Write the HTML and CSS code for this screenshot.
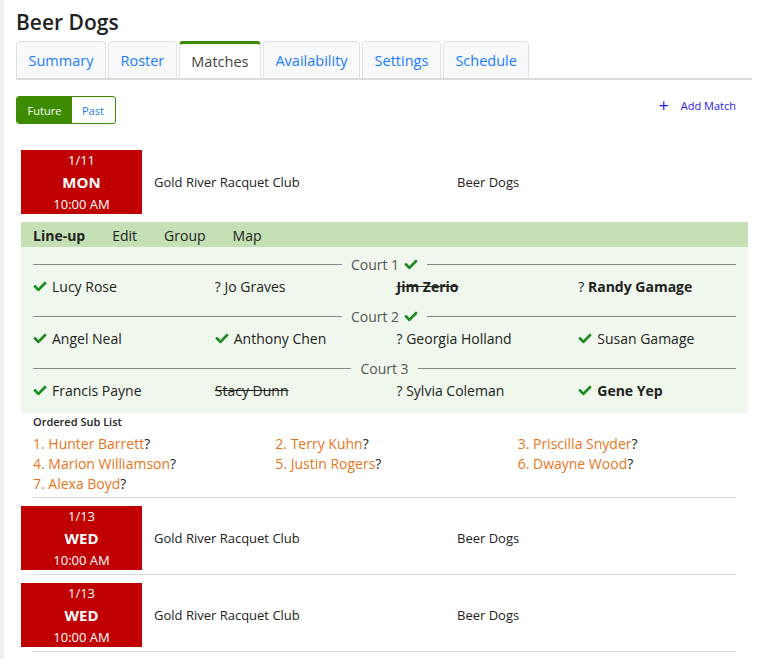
FILE: index.html
```html
<!DOCTYPE html>
<html>
<head>
<meta charset="utf-8">
<link rel="stylesheet" href="styles.css">
</head>
<body>
<div class="page">
  <h1 class="title">Beer Dogs</h1>
  <ul class="tabs">
    <li class="tab">Summary</li>
    <li class="tab">Roster</li>
    <li class="tab active">Matches</li>
    <li class="tab">Availability</li>
    <li class="tab">Settings</li>
    <li class="tab">Schedule</li>
  </ul>
  <div class="toolbar">
    <div class="toggle"><span class="seg on">Future</span><span class="seg">Past</span></div>
    <a class="add"><span class="plus">+</span>Add Match</a>
  </div>

  <div class="matches">
    <div class="match">
      <div class="match-head">
        <div class="date"><div class="d">1/11</div><div class="dow">MON</div><div class="tm">10:00 AM</div></div>
        <div class="venue">Gold River Racquet Club</div>
        <div class="team">Beer Dogs</div>
      </div>
      <div class="detail">
        <div class="detail-nav"><span class="nav-item cur">Line-up</span><span class="nav-item">Edit</span><span class="nav-item">Group</span><span class="nav-item">Map</span></div>
        <div class="lineup">
          <div class="court"><span class="court-label">Court 1 <svg class="ck" viewBox="0 0 512 512"><path d="M173.9 439.4l-166.4-166.4c-10-10-10-26.2 0-36.2l36.2-36.2c10-10 26.2-10 36.2 0L192 312.7 432.1 72.6c10-10 26.2-10 36.2 0l36.2 36.2c10 10 10 26.2 0 36.2l-294.4 294.4c-10 10-26.2 10-36.2 0z"/></svg></span></div>
          <div class="players">
            <div class="p"><svg class="ck" viewBox="0 0 512 512"><path d="M173.9 439.4l-166.4-166.4c-10-10-10-26.2 0-36.2l36.2-36.2c10-10 26.2-10 36.2 0L192 312.7 432.1 72.6c10-10 26.2-10 36.2 0l36.2 36.2c10 10 10 26.2 0 36.2l-294.4 294.4c-10 10-26.2 10-36.2 0z"/></svg>Lucy Rose</div>
            <div class="p">? Jo Graves</div>
            <div class="p"><span class="out b">Jim Zerio</span></div>
            <div class="p">? <span class="b">Randy Gamage</span></div>
          </div>
          <div class="court"><span class="court-label">Court 2 <svg class="ck" viewBox="0 0 512 512"><path d="M173.9 439.4l-166.4-166.4c-10-10-10-26.2 0-36.2l36.2-36.2c10-10 26.2-10 36.2 0L192 312.7 432.1 72.6c10-10 26.2-10 36.2 0l36.2 36.2c10 10 10 26.2 0 36.2l-294.4 294.4c-10 10-26.2 10-36.2 0z"/></svg></span></div>
          <div class="players">
            <div class="p"><svg class="ck" viewBox="0 0 512 512"><path d="M173.9 439.4l-166.4-166.4c-10-10-10-26.2 0-36.2l36.2-36.2c10-10 26.2-10 36.2 0L192 312.7 432.1 72.6c10-10 26.2-10 36.2 0l36.2 36.2c10 10 10 26.2 0 36.2l-294.4 294.4c-10 10-26.2 10-36.2 0z"/></svg>Angel Neal</div>
            <div class="p"><svg class="ck" viewBox="0 0 512 512"><path d="M173.9 439.4l-166.4-166.4c-10-10-10-26.2 0-36.2l36.2-36.2c10-10 26.2-10 36.2 0L192 312.7 432.1 72.6c10-10 26.2-10 36.2 0l36.2 36.2c10 10 10 26.2 0 36.2l-294.4 294.4c-10 10-26.2 10-36.2 0z"/></svg>Anthony Chen</div>
            <div class="p">? Georgia Holland</div>
            <div class="p"><svg class="ck" viewBox="0 0 512 512"><path d="M173.9 439.4l-166.4-166.4c-10-10-10-26.2 0-36.2l36.2-36.2c10-10 26.2-10 36.2 0L192 312.7 432.1 72.6c10-10 26.2-10 36.2 0l36.2 36.2c10 10 10 26.2 0 36.2l-294.4 294.4c-10 10-26.2 10-36.2 0z"/></svg>Susan Gamage</div>
          </div>
          <div class="court"><span class="court-label">Court 3</span></div>
          <div class="players">
            <div class="p"><svg class="ck" viewBox="0 0 512 512"><path d="M173.9 439.4l-166.4-166.4c-10-10-10-26.2 0-36.2l36.2-36.2c10-10 26.2-10 36.2 0L192 312.7 432.1 72.6c10-10 26.2-10 36.2 0l36.2 36.2c10 10 10 26.2 0 36.2l-294.4 294.4c-10 10-26.2 10-36.2 0z"/></svg>Francis Payne</div>
            <div class="p"><span class="out">Stacy Dunn</span></div>
            <div class="p">? Sylvia Coleman</div>
            <div class="p"><svg class="ck" viewBox="0 0 512 512"><path d="M173.9 439.4l-166.4-166.4c-10-10-10-26.2 0-36.2l36.2-36.2c10-10 26.2-10 36.2 0L192 312.7 432.1 72.6c10-10 26.2-10 36.2 0l36.2 36.2c10 10 10 26.2 0 36.2l-294.4 294.4c-10 10-26.2 10-36.2 0z"/></svg><span class="b">Gene Yep</span></div>
          </div>
        </div>
      </div>
      <div class="subs">
        <div class="subs-title">Ordered Sub List</div>
        <div class="sub-grid">
          <div class="sub"><span class="sn">1. Hunter Barrett</span>?</div>
          <div class="sub"><span class="sn">2. Terry Kuhn</span>?</div>
          <div class="sub"><span class="sn">3. Priscilla Snyder</span>?</div>
          <div class="sub"><span class="sn">4. Marion Williamson</span>?</div>
          <div class="sub"><span class="sn">5. Justin Rogers</span>?</div>
          <div class="sub"><span class="sn">6. Dwayne Wood</span>?</div>
          <div class="sub"><span class="sn">7. Alexa Boyd</span>?</div>
        </div>
      </div>
      <hr class="sep">
    </div>

    <div class="match">
      <div class="match-head">
        <div class="date"><div class="d">1/13</div><div class="dow">WED</div><div class="tm">10:00 AM</div></div>
        <div class="venue">Gold River Racquet Club</div>
        <div class="team">Beer Dogs</div>
      </div>
      <hr class="sep">
    </div>

    <div class="match">
      <div class="match-head">
        <div class="date"><div class="d">1/13</div><div class="dow">WED</div><div class="tm">10:00 AM</div></div>
        <div class="venue">Gold River Racquet Club</div>
        <div class="team">Beer Dogs</div>
      </div>
      <hr class="sep">
    </div>
  </div>
</div>
</body>
</html>
```

FILE: styles.css
```css
html, body {
  margin: 0;
  padding: 0;
  background: #fff;
}
body {
  font-family: "Open Sans", "Noto Sans", sans-serif;
  color: #222;
  font-size: 14px;
  border-left: 4px solid #f0f0f0;
  min-height: 659px;
  box-sizing: border-box;
}
.page {
  padding: 9px 7px 0 12px;
}
.title {
  margin: 0;
  font-size: 21px;
  line-height: 26px;
  font-weight: 600;
  color: #222;
}
.tabs {
  list-style: none;
  margin: 6px 0 0 0;
  padding: 0;
  display: flex;
  gap: 2px;
  border-bottom: 2px solid #dcdcdc;
  height: 37px;
}
.tab {
  box-sizing: border-box;
  height: 37px;
  padding: 0 11.5px;
  display: flex;
  align-items: center;
  font-size: 14.5px;
  color: #1a7cff;
  background: #f8f9fa;
  border: 1px solid #dee2e6;
  border-bottom: none;
  border-radius: 4px 4px 0 0;
}
.tab.active {
  background: #fff;
  color: #444;
  border-top: 3px solid #3d8b00;
  padding-top: 1px;
}
.toolbar {
  display: flex;
  justify-content: space-between;
  align-items: center;
  margin-top: 16px;
  padding-right: 16px;
}
.toggle {
  display: flex;
  height: 28px;
  border: 1px solid #3d8b00;
  border-radius: 3px;
  box-sizing: border-box;
  overflow: hidden;
}
.seg {
  display: flex;
  align-items: center;
  padding: 0 11px 0 10px;
  font-size: 11px;
  color: #1a7cff;
}
.seg.on {
  background: #3d8b00;
  color: #fff;
  width: 55px;
  box-sizing: border-box;
  justify-content: center;
  padding: 0;
}
.add {
  font-size: 11px;
  color: #2a1af0;
  display: flex;
  align-items: center;
  margin-top: -10px;
}
.plus {
  font-size: 18px;
  margin-right: 12px;
  line-height: 14px;
}
.matches {
  margin: 26px 4px 0 5px;
}
.match-head {
  display: grid;
  grid-template-columns: 121px 303px 1fr;
  align-items: center;
}
.match + .match {
  padding-top: 8px;
}
.date {
  background: #c00000;
  color: #fff;
  height: 64px;
  text-align: center;
}
.date .d, .date .tm {
  font-size: 13px;
  line-height: 20px;
}
.date .dow {
  font-size: 15px;
  font-weight: 700;
  line-height: 24px;
}
.venue, .team {
  padding-left: 12px;
  font-size: 13px;
}
.detail {
  margin-top: 8px;
}
.detail-nav {
  background: #c5e0b4;
  height: 25px;
  box-sizing: border-box;
  padding-top: 2px;
  display: flex;
  align-items: center;
  padding-left: 12px;
  font-size: 14px;
}
.nav-item {
  margin-right: 27px;
}
.nav-item.cur {
  font-weight: 700;
}
.lineup {
  background: #f0f7ec;
  padding: 7px 12px 11px;
}
.court {
  display: flex;
  align-items: center;
  height: 20px;
  gap: 9px;
  color: #555;
  font-size: 14px;
}
.court::before, .court::after {
  content: "";
  flex: 1;
  height: 1px;
  background: #888;
}
.court-label {
  display: flex;
  align-items: center;
  gap: 5px;
}
.players {
  display: grid;
  grid-template-columns: repeat(4, 1fr);
  height: 24px;
  align-items: center;
  margin: 0 -12px 8px;
}
.players:last-child {
  margin-bottom: 0;
}
.p {
  display: flex;
  align-items: center;
  white-space: pre;
  padding-left: 12px;
}
.ck {
  width: 14px;
  height: 13px;
  fill: #1c8a20;
  margin-right: 5px;
  flex: none;
}
.court-label .ck {
  margin-right: 0;
}
.out {
  text-decoration: line-through;
}
.b {
  font-weight: 700;
}
.subs {
  padding: 2px 0 0;
}
.subs-title {
  font-size: 11px;
  font-weight: 600;
  line-height: 14px;
  padding-left: 12px;
}
.sub-grid {
  display: grid;
  grid-template-columns: repeat(3, 1fr);
  margin-top: 5px;
}
.sub {
  line-height: 20px;
  font-size: 14px;
  padding-left: 12px;
}
.sn {
  color: #e8761c;
}
.sep {
  border: 0;
  border-top: 1px solid #d6d6d6;
  margin: 3px 12px 0;
}
.match + .match .sep {
  margin-top: 4px;
}
```
